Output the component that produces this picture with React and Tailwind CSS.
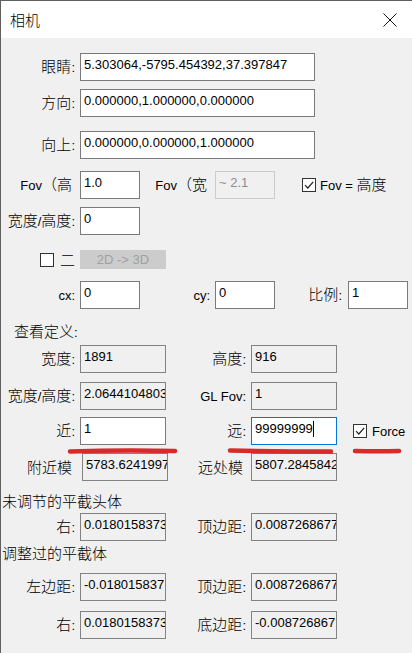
import React from 'react';

const CJK = /([\u2e80-\u9fff\u3000-\u303f\uff00-\uffef]+)/;

// CJK runs come out at 15px, latin runs at 13px (as in the dialog font)
const Txt = ({ text }) =>
  text.split(CJK).filter(Boolean).map((part, i) =>
    CJK.test(part)
      ? <span key={i} className="text-[15px] font-light font-['Noto_Sans_CJK_SC',sans-serif]">{part}</span>
      : <span key={i} className="text-[13px]">{part}</span>
  );

const Label = ({ text, w }) => (
  <div className={`${w} shrink-0 text-right whitespace-nowrap leading-[20px] text-black`}>
    <Txt text={text} />
  </div>
);

const boxStyles = {
  edit: 'bg-white border-[#7a7a7a] text-black',
  ro: 'bg-[#f0f0f0] border-[#838383] text-black',
  off: 'bg-[#f0f0f0] border-[#cccccc] text-[#8d8d8d]',
  focus: 'bg-white border-[#0078d7] text-black',
};

const Box = ({ value, w, kind = 'edit', ml = 'ml-[5px]', caret }) => (
  <div className={`${w} ${ml} ${boxStyles[kind]} h-[28px] shrink-0 border overflow-hidden whitespace-nowrap pl-[3px] pt-[2px] text-[13px] leading-[18px] flex items-start`}>
    <span>{value}</span>
    {caret && <span className="inline-block w-px h-[16px] bg-black mt-[1px]" />}
  </div>
);

const Check = ({ checked, ml }) => (
  <div className={`${ml} w-[14px] h-[14px] shrink-0 border border-[#333] bg-white flex items-center justify-center`}>
    {checked && (
      <svg width="12" height="12" viewBox="0 0 12 12">
        <path d="M2 6.2 L4.8 9 L10.2 2.8" fill="none" stroke="#222" strokeWidth="1.2" />
      </svg>
    )}
  </div>
);

const Row = ({ mt, children }) => (
  <div className={`${mt} flex items-center h-[28px]`}>{children}</div>
);

const Heading = ({ text, ml, mt }) => (
  <div className={`${mt} ${ml} h-[20px] leading-[20px] whitespace-nowrap`}>
    <Txt text={text} />
  </div>
);

export default function App() {
  return (
    <div className="relative w-[412px] h-[653px] overflow-hidden bg-[#f0f0f0] border-l border-t border-[#5f5f5f] font-['Liberation_Sans','Noto_Sans_CJK_SC',sans-serif] text-black">
      {/* title bar */}
      <div className="h-[37px] bg-white flex items-center justify-between pl-[9px] pr-[15px]">
        <span className="text-[15px] font-light font-['Noto_Sans_CJK_SC',sans-serif] leading-[20px]">相机</span>
        <svg width="14" height="14" viewBox="0 0 14 14">
          <path d="M0.5 0.5 L13.5 13.5 M13.5 0.5 L0.5 13.5" stroke="#111" strokeWidth="1" />
        </svg>
      </div>

      <Row mt="mt-[15px]">
        <Label text="眼睛:" w="w-[74px]" />
        <Box value="5.303064,-5795.454392,37.397847" w="w-[235px]" />
      </Row>
      <Row mt="mt-[8px]">
        <Label text="方向:" w="w-[74px]" />
        <Box value="0.000000,1.000000,0.000000" w="w-[235px]" />
      </Row>
      <Row mt="mt-[14px]">
        <Label text="向上:" w="w-[74px]" />
        <Box value="0.000000,0.000000,1.000000" w="w-[235px]" />
      </Row>

      <Row mt="mt-[12px]">
        <Label text="Fov（高" w="w-[71px]" />
        <Box value="1.0" w="w-[60px]" ml="ml-[8px]" />
        <Label text="Fov（宽" w="w-[67px]" />
        <Box value="~ 2.1" w="w-[60px]" ml="ml-[8px]" kind="off" />
        <Check checked ml="ml-[27px]" />
        <div className="ml-[4px] whitespace-nowrap leading-[20px]"><Txt text="Fov = 高度" /></div>
      </Row>
      <Row mt="mt-[8px]">
        <div className="ml-[2px]"><Label text="宽度/高度:" w="w-[72px]" /></div>
        <Box value="0" w="w-[60px]" />
      </Row>

      <div className="mt-[15px] flex items-center h-[19px]">
        <Check ml="ml-[39px]" />
        <div className="ml-[6px] leading-[19px]"><Txt text="二" /></div>
        <div className="ml-[5px] w-[86px] h-[19px] bg-[#cccccc] text-[#a0a0a0] text-[13px] leading-[19px] text-center">2D -&gt; 3D</div>
      </div>

      <Row mt="mt-[12px]">
        <Label text="cx:" w="w-[74px]" />
        <Box value="0" w="w-[60px]" />
        <Label text="cy:" w="w-[70px]" />
        <Box value="0" w="w-[60px]" />
        <Label text="比例:" w="w-[67px]" />
        <Box value="1" w="w-[60px]" ml="ml-[6px]" />
      </Row>

      <Heading text="查看定义:" ml="ml-[13px]" mt="mt-[12px]" />

      <Row mt="mt-[4px]">
        <Label text="宽度:" w="w-[74px]" />
        <Box value="1891" w="w-[86px]" kind="ro" />
        <Label text="高度:" w="w-[80px]" />
        <Box value="916" w="w-[86px]" kind="ro" />
      </Row>
      <Row mt="mt-[9px]">
        <Label text="宽度/高度:" w="w-[74px]" />
        <Box value="2.0644104803" w="w-[86px]" kind="ro" />
        <Label text="GL Fov:" w="w-[80px]" />
        <Box value="1" w="w-[86px]" kind="ro" />
      </Row>
      <Row mt="mt-[7px]">
        <Label text="近:" w="w-[74px]" />
        <Box value="1" w="w-[86px]" />
        <Label text="远:" w="w-[80px]" />
        <Box value="99999999" w="w-[86px]" kind="focus" caret />
        <Check checked ml="ml-[16px]" />
        <div className="ml-[5px] leading-[20px]"><Txt text="Force" /></div>
      </Row>
      <Row mt="mt-[8px]">
        <Label text="附近模" w="w-[71px]" />
        <Box value="5783.6241997" w="w-[86px]" kind="ro" ml="ml-[10px]" />
        <Label text="远处模" w="w-[75px]" />
        <Box value="5807.2845842" w="w-[86px]" kind="ro" ml="ml-[8px]" />
      </Row>

      <Heading text="未调节的平截头体" ml="ml-[1px]" mt="mt-[10px]" />
      <Row mt="mt-[2px]">
        <Label text="右:" w="w-[74px]" />
        <Box value="0.0180158373" w="w-[86px]" kind="ro" />
        <Label text="顶边距:" w="w-[80px]" />
        <Box value="0.0087268677" w="w-[86px]" kind="ro" />
      </Row>

      <Heading text="调整过的平截体" ml="ml-[1px]" mt="mt-[2px]" />
      <Row mt="mt-[10px]">
        <Label text="左边距:" w="w-[74px]" />
        <Box value="-0.018015837" w="w-[86px]" kind="ro" />
        <Label text="顶边距:" w="w-[80px]" />
        <Box value="0.0087268677" w="w-[86px]" kind="ro" />
      </Row>
      <Row mt="mt-[10px]">
        <Label text="右:" w="w-[74px]" />
        <Box value="0.0180158373" w="w-[86px]" kind="ro" />
        <Label text="底边距:" w="w-[80px]" />
        <Box value="-0.008726867" w="w-[86px]" kind="ro" />
      </Row>

      {/* red hand-drawn annotation marks */}
      <svg className="absolute left-[-1px] top-[-1px] pointer-events-none" width="412" height="653" viewBox="0 0 412 653">
        <g fill="none" stroke="#d8292b" strokeWidth="4.5" strokeLinecap="round">
          <path d="M70 451.5 Q120 450 175 451" />
          <path d="M230 450.5 Q280 451.5 331 451.5" />
          <path d="M355 451 Q378 451.5 399 451" />
        </g>
      </svg>
    </div>
  );
}
